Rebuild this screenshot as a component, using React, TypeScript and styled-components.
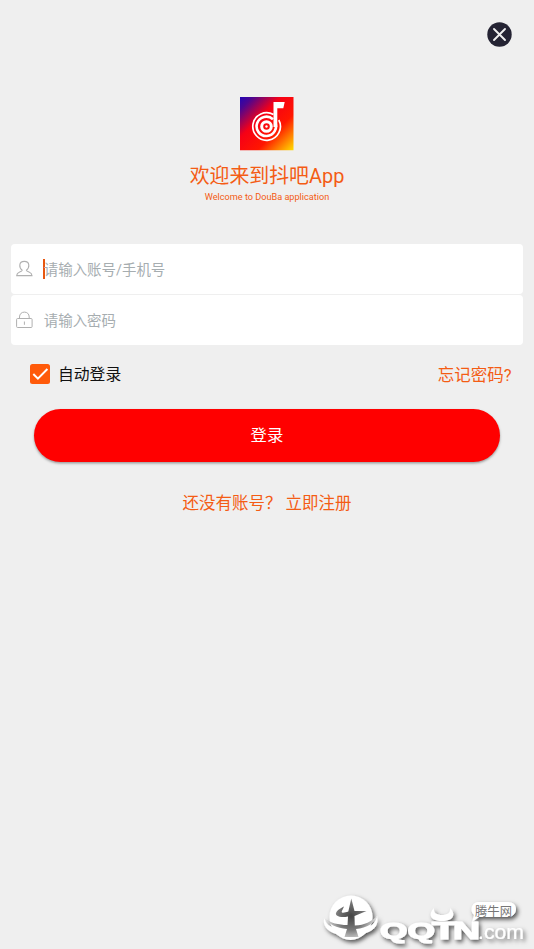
import React from "react";
import styled, { createGlobalStyle } from "styled-components";

const GlobalStyle = createGlobalStyle`
  * { box-sizing: border-box; }
  body { margin: 0; background: #efefef; }
`;

const Screen = styled.main`
  position: relative;
  width: 534px;
  height: 949px;
  overflow: hidden;
  display: flex;
  flex-direction: column;
  background: #efefef;
  font-family: Roboto, "Noto Sans CJK SC", sans-serif;
  color: #f45c14;
`;

const TopBar = styled.header`
  display: flex;
  justify-content: flex-end;
  padding: 22px 22px 0 0;
  height: 97px;
`;

const CloseButton = styled.button`
  width: 25px;
  height: 25px;
  padding: 0;
  border: 0;
  background: none;
`;

const Brand = styled.section`
  display: flex;
  flex-direction: column;
  align-items: center;
  height: 147px;
`;

const Title = styled.h1`
  margin: 11px 0 0;
  font-size: 19.9px;
  line-height: 30px;
  font-weight: 400;
`;

const Subtitle = styled.p`
  margin: 0;
  font-size: 9.15px;
  line-height: 11px;
`;

const Fields = styled.div`
  display: flex;
  flex-direction: column;
  gap: 1px;
  padding: 0 11px;
`;

const Field = styled.label`
  display: flex;
  align-items: center;
  height: 50px;
  padding-left: 5px;
  border-radius: 4px;
  background: #fff;
`;

const Caret = styled.span<{ $active?: boolean }>`
  width: 1.5px;
  height: 20px;
  margin-left: 10px;
  margin-right: -0.7px;
  background: ${(p) => (p.$active ? "#e8560f" : "transparent")};
`;

const Placeholder = styled.span`
  font-size: 14.45px;
  line-height: 22px;
  color: #a6adb0;
  padding-top: 4px;
`;

const Options = styled.div`
  display: flex;
  justify-content: space-between;
  align-items: center;
  height: 26px;
  margin-top: 16px;
  padding: 0 22.5px 0 30px;
`;

const Remember = styled.label`
  display: flex;
  align-items: center;
  gap: 8px;
  font-size: 15.8px;
  line-height: 24px;
  color: #111;
`;

const OptionText = styled.span`
  padding-top: 2px;
`;

const CheckBox = styled.span`
  display: flex;
  width: 20px;
  height: 20px;
  border-radius: 2.5px;
  background: #ff5a0a;
`;

const Link = styled.a`
  padding-top: 3px;
  font-size: 16.5px;
  line-height: 24px;
`;

const LoginButton = styled.button`
  height: 53px;
  margin: 22px 34px 0;
  padding: 0 0 3px;
  border: 0;
  border-radius: 27px;
  background: #f00;
  color: #fff;
  font: inherit;
  font-size: 16.4px;
  box-shadow: 0 1.5px 2.5px rgba(0, 0, 0, 0.35);
`;

const Register = styled.div`
  display: flex;
  justify-content: center;
  margin-top: 30px;
  font-size: 16.5px;
  line-height: 24px;
  white-space: pre;
`;

const Watermark = styled.svg`
  position: absolute;
  left: 320px;
  top: 885px;
`;

function LogoIcon() {
  return (
    <svg width="54" height="54" viewBox="0 0 54 54">
      <defs>
        <linearGradient id="cover" x1="0" y1="0" x2="1" y2="1">
          <stop offset="0" stopColor="#2106b4" />
          <stop offset=".12" stopColor="#4c0590" />
          <stop offset=".38" stopColor="#f60016" />
          <stop offset=".66" stopColor="#ff1600" />
          <stop offset="1" stopColor="#ffdf00" />
        </linearGradient>
      </defs>
      <path d="M0 0h53.5v53.3H0z" fill="url(#cover)" />
      <g fill="none" stroke="#fff">
        <path d="M33.5 17.5A13.8 13.8 0 1 0 38.8 23" strokeWidth="1.7" />
        <path d="M33 22.3A9.7 9.7 0 1 0 35 25" strokeWidth="2.6" />
        <circle cx="26.5" cy="29.5" r="4.8" strokeWidth="3" />
      </g>
      <path d="M33.5 5h11.2l-1.4 6.3H37.3V30h-3.8z" fill="#fff" />
      <circle cx="26.5" cy="29.5" r="1.2" fill="#fff" />
    </svg>
  );
}

function UserIcon() {
  return (
    <svg width="17" height="18" viewBox="0 0 17 18" fill="none" stroke="#b0b0b0" strokeWidth="1.1">
      <path d="M6.2 10.2C4.4 8.8 3.6 7 3.8 5 4 2.8 5.800 1.400 8.300 1.400s4.300 1.400 4.500 3.600c.2 2-.6 3.800-2.400 5.200.2 1.200 1.500 1.500 3 2 1.700.6 2.400 1.400 2.600 3.400H.7c.1-2 .9-2.800 2.600-3.400 1.500-.5 2.700-.8 2.900-2z" />
    </svg>
  );
}

function LockIcon() {
  return (
    <svg width="17" height="18" viewBox="0 0 17 18" fill="none" stroke="#b0b0b0" strokeWidth="1">
      <rect x=".6" y="7.5" width="15.5" height="9" rx="1" />
      <path d="M3.5 7.3V6c0-2.9 2-4.9 4.9-4.9s4.8 2 4.8 4.9v1.3M8.4 10.5v3.3" />
    </svg>
  );
}

function SiteMark() {
  return (
    <Watermark width="214" height="64" viewBox="0 0 214 64">
      <defs>
        <filter id="drop" x="-10%" y="-20%" width="125%" height="150%">
          <feDropShadow dx="2" dy="2.5" stdDeviation="1.9" floodColor="#000" floodOpacity=".65" />
        </filter>
        <radialGradient id="shade" gradientUnits="userSpaceOnUse" cx="31" cy="31" r="27">
          <stop offset="0" stopColor="#444" />
          <stop offset=".5" stopColor="#777" />
          <stop offset="1" stopColor="#eee" />
        </radialGradient>
        <filter id="soft"><feGaussianBlur stdDeviation=".6" /></filter>
      </defs>
      <g filter="url(#drop)" fill="#fff">
        <circle cx="31" cy="32" r="21.5" />
        <path d="M4.500 33c1 6 5 9 12 10l28 0c7-1 11-5 12.500-12 2 8-2 14-11 17-10 9-20 9-30 1C7 46 2 40 4.500 33z" />
        <g fontFamily="Liberation Sans, sans-serif" fontWeight="700" stroke="#fff" strokeLinejoin="round" strokeWidth="1.2">
          <text x="60" y="53" textLength="55" lengthAdjust="spacingAndGlyphs" fontSize="22">QQ</text>
          <text x="112" y="53.500" textLength="25" lengthAdjust="spacingAndGlyphs" fontSize="24.500">T</text>
          <text x="133" y="53.500" textLength="27" lengthAdjust="spacingAndGlyphs" fontSize="24.500">N</text>
        </g>
        <path d="M114 23c-6 6-4 13 8 13s14-7 8-13c1 5-3 7-8 7s-9-2-8-7z" />
        <path d="M158 17h30c5 0 8 3 8 7s-3 8-8 8h-29l-7 5 2-7c-5-4-2-13 4-13z" />
        <text x="158" y="54" textLength="46" lengthAdjust="spacingAndGlyphs" fontFamily="Liberation Sans, sans-serif" fontSize="21">.com</text>
      </g>
      <g filter="url(#soft)" fill="url(#shade)">
        <path d="M31.300 13.500l3.200 12.500 12 0-12 5 .3 9.500C45 40 51 37 58 30c-3 8-11 13-22 14l2.500 8H24.500l2.500-8C17 43 8 39 4 33c7 5 14 7 23.500 7l.5-8.500C20 33 15 31 16 28c1-3 5-5 8-6.500-1 3-3 5-2 6 1 .5 4 0 6.300-1z" />
      </g>
      <text x="155" y="30.500" textLength="37" fontFamily="Noto Sans CJK SC, sans-serif" fontSize="12.300" fill="#777">腾牛网</text>
    </Watermark>
  );
}

export default function App() {
  return (
    <Screen lang="zh-CN">
      <GlobalStyle />
      <TopBar>
        <CloseButton aria-label="关闭">
          <svg width="25" height="25" viewBox="0 0 25 25">
            <circle cx="12.5" cy="12.5" r="12.2" fill="#242333" />
            <path d="M7 7l11 11M18 7L7 18" stroke="#efefef" strokeWidth="1.9" strokeLinecap="round" />
          </svg>
        </CloseButton>
      </TopBar>
      <Brand>
        <LogoIcon />
        <Title>欢迎来到抖吧App</Title>
        <Subtitle>Welcome to DouBa application</Subtitle>
      </Brand>
      <Fields>
        <Field>
          <UserIcon />
          <Caret $active />
          <Placeholder>请输入账号/手机号</Placeholder>
        </Field>
        <Field>
          <LockIcon />
          <Caret />
          <Placeholder>请输入密码</Placeholder>
        </Field>
      </Fields>
      <Options>
        <Remember>
          <CheckBox>
            <svg width="20" height="20" viewBox="0 0 20 20" fill="none">
              <path d="M3.3 10l4.600 4.600 9.500-9.600" stroke="#fff" strokeWidth="2" />
            </svg>
          </CheckBox>
          <OptionText>自动登录</OptionText>
        </Remember>
        <Link>忘记密码?</Link>
      </Options>
      <LoginButton>登录</LoginButton>
      <Register>还没有账号？ 立即注册</Register>
      <SiteMark />
    </Screen>
  );
}
